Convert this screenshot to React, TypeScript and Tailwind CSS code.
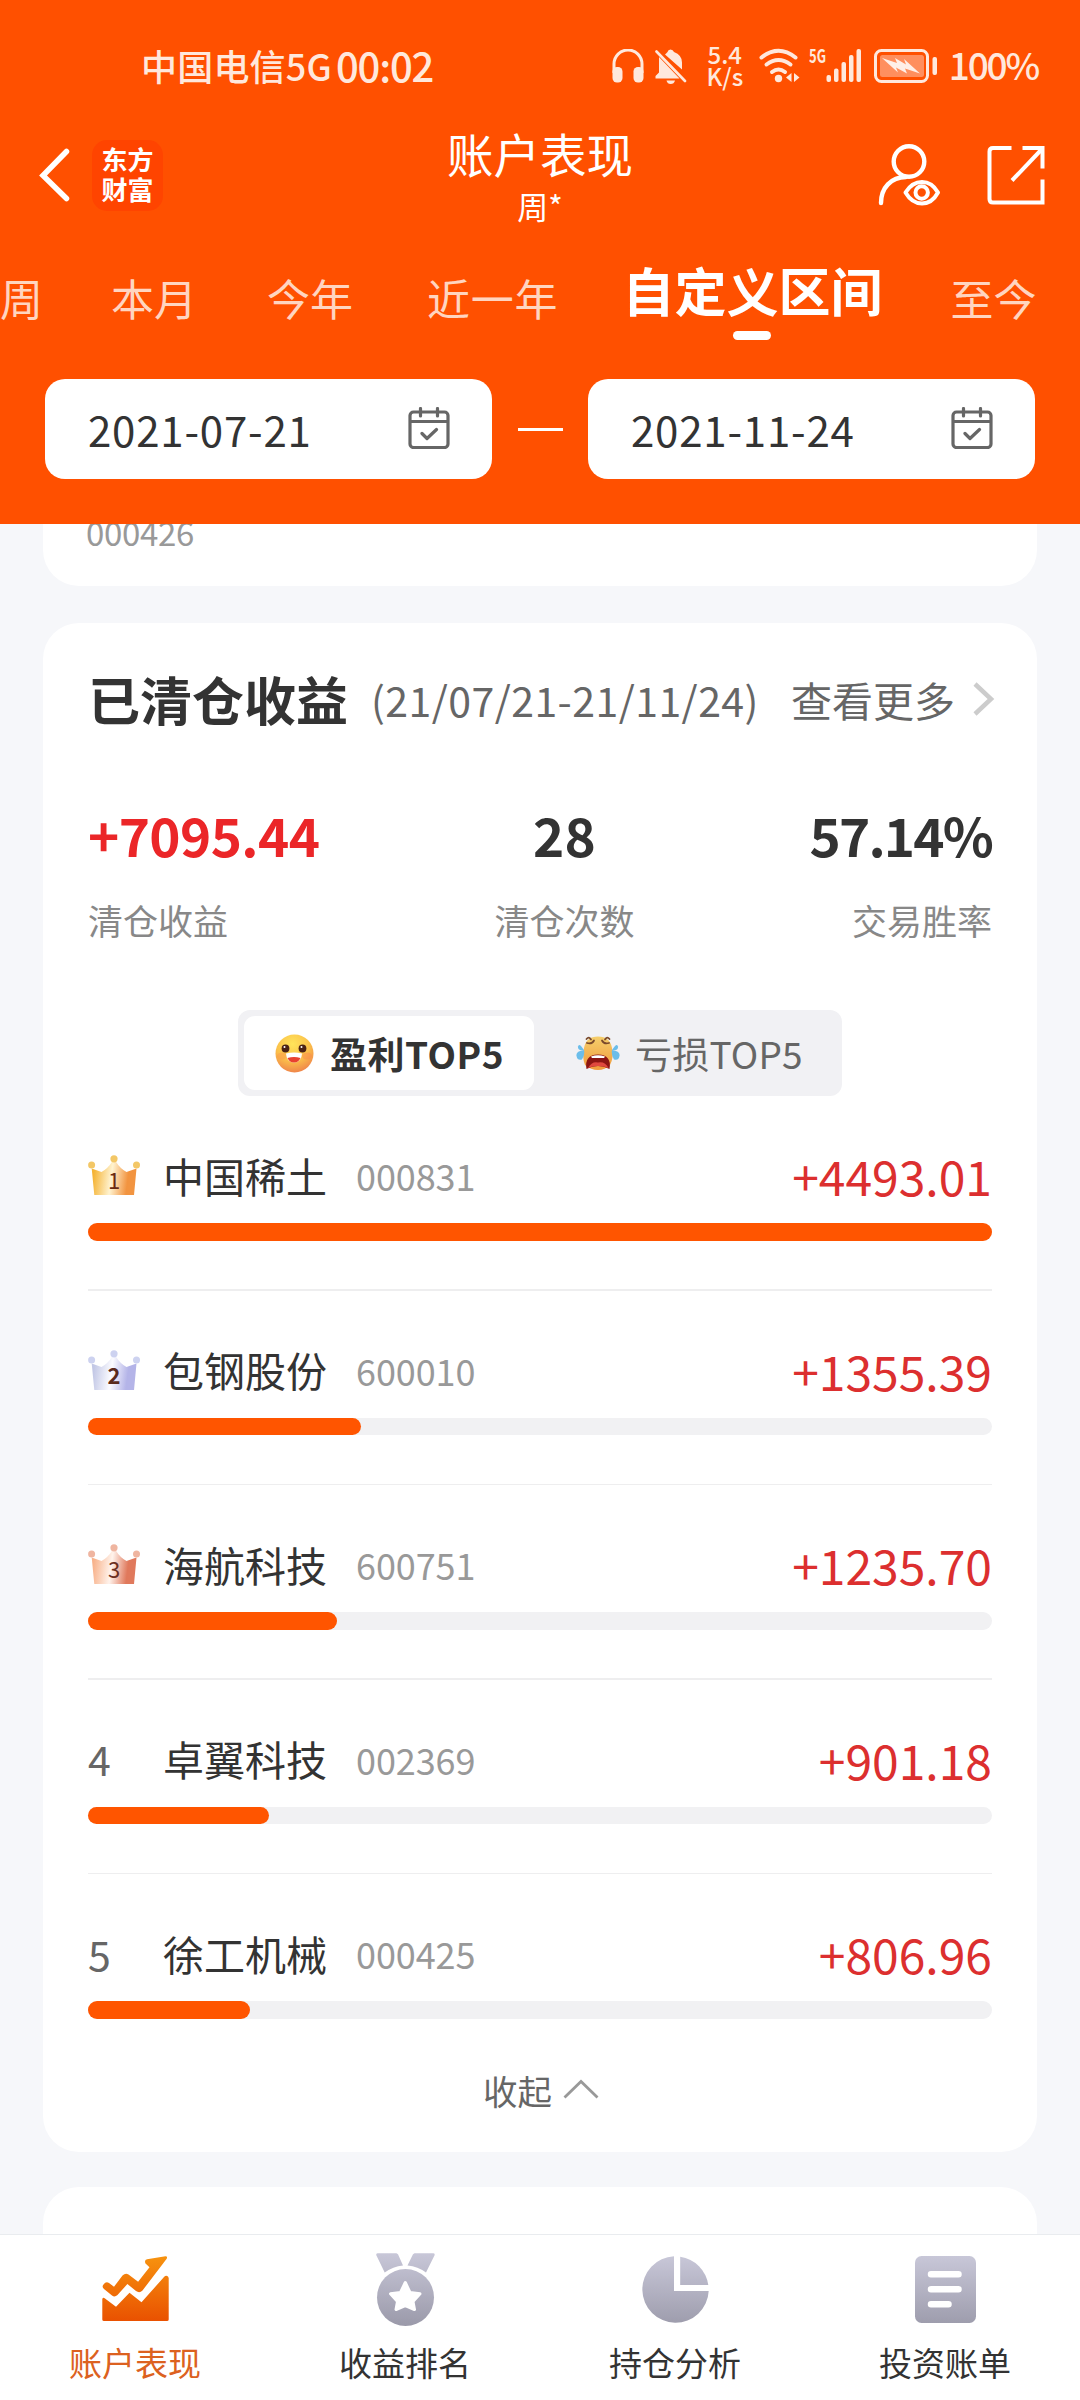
import clsx from "clsx";

const TABS = [
  { label: "周", className: "w-[41px]" },
  { label: "本月", className: "ml-[70px]" },
  { label: "今年", className: "ml-[70px]" },
  { label: "近一年", className: "ml-[74px] tracking-[0.800px]" },
  { label: "自定义区间", className: "ml-[64px]" },
  { label: "至今", className: "ml-[68px]" },
];
const ACTIVE_TAB = "自定义区间";

const STOCKS = [
  { rank: 1, name: "中国稀土", code: "000831", profit: 4493.01 },
  { rank: 2, name: "包钢股份", code: "600010", profit: 1355.39 },
  { rank: 3, name: "海航科技", code: "600751", profit: 1235.7 },
  { rank: 4, name: "卓翼科技", code: "002369", profit: 901.18 },
  { rank: 5, name: "徐工机械", code: "000425", profit: 806.96 },
];

const MAX_PROFIT = STOCKS[0].profit;

const CROWN_COLORS = [
  { left: "#f5b436", mid: "#fff3d0", right: "#f29440", ball: "#f3c766", text: "#6b2a12" },
  { left: "#c3c8e6", mid: "#fbfbff", right: "#b4b4e8", ball: "#cdd2f0", text: "#5a2a1e" },
  { left: "#f8b38c", mid: "#fff3ec", right: "#e0795c", ball: "#efb5a0", text: "#6b2f22" },
];

const StatusBar = () => (
  <div className="flex h-[129px] items-center pl-[141px] pr-[42px] leading-none text-[#ffe8dc]">
    <span className="text-[36px] font-medium tracking-[0.2px]">中国电信5G</span>
    <span className="ml-[4px] text-[40px] font-medium tracking-[-1.2px]">00:02</span>
    <div className="ml-auto flex items-center">
      <svg width="32" height="34" viewBox="0 0 32 34" className="mt-[3px]">
        <path d="M2 24V15a14 14 0 0 1 28 0v9" fill="none" stroke="currentColor" strokeWidth="3" />
        <rect x="0.5" y="18" width="10" height="15.5" rx="4.5" fill="currentColor" />
        <rect x="21.5" y="18" width="10" height="15.5" rx="4.5" fill="currentColor" />
      </svg>
      <svg width="32" height="35" viewBox="0 0 32 35" className="ml-[11px] mt-[3px]" fill="currentColor">
        <path d="M4 8 24.5 29.500H0.500V27L4 23.500Z" />
        <path d="M10 5.500Q12 3.500 12.500 3 13 0.500 15.500 0.500T19 3Q27 6 27 13.500V20.500Z" />
        <path d="M11.500 31.500H20Q19 35 15.700 35T11.500 31.500Z" />
        <path d="M1.500 2.500 30 32" stroke="currentColor" strokeWidth="2.600" strokeLinecap="round" />
      </svg>
      <div className="ml-[20px] flex w-[36px] flex-col items-center text-[24px] font-medium leading-[22px]">
        <span>5.4</span>
        <span>K/s</span>
      </div>
      <svg width="42" height="35" viewBox="0 0 42 35" className="ml-[16px] mt-[1px]">
        <g fill="none" stroke="currentColor" strokeWidth="4" strokeLinecap="round">
          <path d="M2.500 9.500Q19.500-4 36.500 9.500" />
          <path d="M7.500 16.500Q19.500 7.500 31.500 16.500" />
          <path d="M13 24Q19.500 19 26 24" />
        </g>
        <circle cx="19.500" cy="30.500" r="3.700" fill="currentColor" />
        <path d="M27 29.500 32.500 25V34ZM40.500 29.500 35 25V34Z" fill="currentColor" />
      </svg>
      <svg width="54" height="35" viewBox="0 0 54 35" className="ml-[8px] mt-[1px]" fill="currentColor">
        <text x="0" y="14.500" fontSize="19" fontWeight="700" textLength="17" lengthAdjust="spacingAndGlyphs">
          5G
        </text>
        <rect x="17.500" y="27" width="4.500" height="7" rx="2" />
        <rect x="25" y="20.500" width="4.500" height="13.500" rx="2" />
        <rect x="32.500" y="14" width="4.500" height="20" rx="2" />
        <rect x="40" y="7" width="4.500" height="27" rx="2" />
        <rect x="47.500" y="1" width="4.500" height="33" rx="2" />
      </svg>
      <svg width="64" height="34" viewBox="0 0 64 34" className="ml-[11px] mt-[3px]">
        <rect x="1.500" y="1.500" width="52" height="31" rx="6" fill="none" stroke="currentColor" strokeWidth="3" />
        <rect x="6" y="6" width="44" height="22" rx="2.500" fill="#ff8f5e" />
        <path d="M8 9 23 14 21 9 32 15.500 30 10 46 24.500 31 19.500 33 24.500 22 18.500 24 23.500Z" fill="#fff0e8" />
        <rect x="58.500" y="8" width="4.500" height="18" rx="2" fill="currentColor" />
      </svg>
      <span className="ml-[11px] text-[37px] font-medium tracking-[-2.200px]">100%</span>
    </div>
  </div>
);

const TitleBar = () => (
  <div className="grid h-[92px] grid-cols-[1fr_auto_1fr] items-center text-white">
    <div className="flex items-center pl-[38px]">
      <svg width="34" height="56" viewBox="0 0 34 56" fill="none">
        <path d="M28.500 4.500 5 28.500 28.500 51.500" stroke="currentColor" strokeWidth="5.500" strokeLinecap="round" />
      </svg>
      <div className="ml-[20px] flex h-[71px] w-[71px] flex-col items-center justify-center rounded-[15px] bg-[#ff4400] pb-[2px] text-[26px] font-bold leading-[30px]">
        <span>东方</span>
        <span>财富</span>
      </div>
    </div>
    <div className="flex flex-col items-center gap-[14px]">
      <h1 className="text-[46.500px] leading-[46px]">账户表现</h1>
      <span className="text-[31px] leading-[31px]">周*</span>
    </div>
    <div className="flex items-center justify-end gap-[45px] pr-[35px]">
      <svg width="64" height="62" viewBox="0 0 64 62" fill="none" stroke="currentColor">
        <circle cx="31" cy="17.500" r="15.300" strokeWidth="4.400" />
        <path d="M3 59C3 44 13 33 28 33" strokeWidth="4.400" strokeLinecap="round" />
        <path d="M27.500 48.500Q34 38 44 38T60 48.500Q54 59.500 44 59.500T27.500 48.500Z" strokeWidth="4" strokeLinejoin="round" />
        <circle cx="43.700" cy="48.500" r="6.200" strokeWidth="4" />
      </svg>
      <svg width="58" height="60" viewBox="0 0 58 60" fill="none" stroke="currentColor" strokeWidth="4">
        <path d="M24.500 3H6Q2.500 3 2.500 6.500V54Q2.500 57.500 6 57.500H55.500V34.500" />
        <path d="M35.500 3H55.500V23.500" />
        <path d="M55 4 25 35.500" />
      </svg>
    </div>
  </div>
);

const PeriodTabs = () => (
  <div className="flex h-[158px] items-start whitespace-nowrap">
    {TABS.map(({ label, className }) =>
      label === ACTIVE_TAB ? (
        <div key={label} className={clsx("mt-[43px] flex flex-col items-center text-white", className)}>
          <span className="text-[52px] font-bold leading-[52px]">{label}</span>
          <span className="mt-[15px] h-[9px] w-[38px] rounded-full bg-white" />
        </div>
      ) : (
        <span key={label} className={clsx("mt-[55px] text-[43px] leading-[43px] text-[#ffd5c0]", className)}>
          {label}
        </span>
      ),
    )}
  </div>
);

const DateField = ({ value }: { value: string }) => (
  <div className="flex h-[100px] w-[447px] items-center justify-between rounded-[20px] bg-white pl-[43px] pr-[42px]">
    <span className="text-[42px] leading-none tracking-[0.800px] text-[#333]">{value}</span>
    <svg width="42" height="42" viewBox="0 0 42 42" className="-mt-[2px]" fill="none" stroke="#666" strokeWidth="3.200">
      <rect x="2" y="5" width="38" height="35.500" rx="3.500" />
      <path d="M2 14.500H40" />
      <path d="M12.500 1.500V9M29.500 1.500V9M14 26.500 19 31.500 28.500 22.500" strokeLinecap="round" strokeLinejoin="round" />
    </svg>
  </div>
);

const Crown = ({ rank }: { rank: number }) => {
  const c = CROWN_COLORS[rank - 1];
  return (
    <svg width="52" height="40" viewBox="0 0 52 40">
      <defs>
        <linearGradient id={`crown-${rank}`} x1="0" y1="0" x2="1" y2="0.100">
          <stop offset="0.080" stopColor={c.left} />
          <stop offset="0.480" stopColor={c.mid} />
          <stop offset="0.850" stopColor={c.right} />
        </linearGradient>
      </defs>
      <path
        d="M3.700 13.500 13.500 17Q20 13.500 24.500 6H27.500Q32 13.500 38.500 17L48.500 13.500 46 40H6.300Z"
        fill={`url(#crown-${rank})`}
      />
      <g fill={c.ball}>
        <circle cx="3.600" cy="10" r="3.500" />
        <circle cx="26" cy="3.800" r="3.600" />
        <circle cx="48.500" cy="10" r="3.500" />
      </g>
      <text x="26" y="34" fontSize="22" fontWeight={rank === 2 ? 700 : 400} textAnchor="middle" fill={c.text}>
        {rank}
      </text>
    </svg>
  );
};

const SmileEmoji = () => (
  <svg width="39" height="39" viewBox="0 0 39 39">
    <defs>
      <radialGradient id="smile-face" cx="0.450" cy="0.250" r="0.800">
        <stop offset="0" stopColor="#ffe45a" />
        <stop offset="0.550" stopColor="#fbc04a" />
        <stop offset="1" stopColor="#ee7d4a" />
      </radialGradient>
    </defs>
    <circle cx="19.500" cy="19.500" r="19" fill="url(#smile-face)" />
    <ellipse cx="7" cy="22" rx="5" ry="3.500" fill="#fb9a4c" opacity="0.500" />
    <ellipse cx="32" cy="22" rx="5" ry="3.500" fill="#fb8a4c" opacity="0.500" />
    <circle cx="10.500" cy="14.500" r="3.900" fill="#4a2114" />
    <circle cx="27.500" cy="14.500" r="3.900" fill="#4a2114" />
    <circle cx="9.500" cy="13" r="1" fill="#fff" />
    <circle cx="26.500" cy="13" r="1" fill="#fff" />
    <path d="M11 19.500Q19 17.500 27 19.500 26.500 28.500 19 28.500T11 19.500Z" fill="#fff" />
    <path d="M12.500 24Q19 22 25.500 24 23.500 28.500 19 28.500T12.500 24Z" fill="#e8412f" />
  </svg>
);

const CryEmoji = () => (
  <svg width="44" height="35" viewBox="0 0 44 35">
    <defs>
      <linearGradient id="cry-face" x1="0" y1="0" x2="0" y2="1">
        <stop offset="0" stopColor="#f5cf6c" />
        <stop offset="1" stopColor="#f09a3c" />
      </linearGradient>
    </defs>
    <path d="M8 12Q10 0.500 22 0.500T36 12Q38 22 34 29 29 34 22 34T9 29Q6 22 8 12Z" fill="url(#cry-face)" />
    <path d="M10.500 33Q8 19 22 18.500 36 19 33.500 33 28 30 22 30T10.500 33Z" fill="#8c1512" />
    <path d="M12 32Q16 25 22 26.500 29 25 32.500 32 28 30 22 30T12 32Z" fill="#e0483e" />
    <path d="M15 20.500Q22 18 29 20.500L28 22H16Z" fill="#fff" />
    <g fill="#6bbdea">
      <path d="M8 14Q3 6 2 10.500 1.500 15 8 14Z" />
      <path d="M8 14Q-0.500 15 0.500 20T6 23.500Q9 19 8 14Z" />
      <path d="M36 14Q41 6 42 10.500 42.500 15 36 14Z" />
      <path d="M36 14Q44.500 15 43.500 20T38 23.500Q35 19 36 14Z" />
    </g>
    <path
      d="M10.500 3Q13 0 15 3.500M11 7Q16 8.500 18 4.500M33.500 3Q31 0 29 3.500M33 7Q28 8.500 26 4.500"
      fill="none"
      stroke="#7a4a2c"
      strokeWidth="1.800"
      strokeLinecap="round"
    />
  </svg>
);

const StockRow = ({ stock, last }: { stock: (typeof STOCKS)[number]; last: boolean }) => (
  <li className="flex h-[194.500px] flex-col">
    <div className="mt-[55px] flex h-[48px] items-center leading-none">
      <div className="w-[75px]">
        {stock.rank <= 3 ? <Crown rank={stock.rank} /> : <span className="text-[41px] text-[#666]">{stock.rank}</span>}
      </div>
      <span className="text-[41px] text-[#333]">{stock.name}</span>
      <span className="ml-[29px] text-[36px] tracking-[-0.100px] text-[#999]">{stock.code}</span>
      <span className="ml-auto text-[48px] text-[#dc2f2f]">+{stock.profit.toFixed(2)}</span>
    </div>
    <div className="mt-[24px] h-[17.500px] rounded-[9px] bg-[#f1f1f3]">
      <div
        className="h-full rounded-[9px] bg-[#ff5500]"
        style={{ width: `${(stock.profit / MAX_PROFIT) * 100}%` }}
      />
    </div>
    {!last && <div className="mt-auto h-[1.500px] bg-[#eeeeef]" />}
  </li>
);

const ClearedCard = () => (
  <section className="mx-[43px] mt-[37px] h-[1529px] shrink-0 rounded-[36px] bg-white px-[45px] pt-[50px]">
    <div className="flex h-[52px] items-center whitespace-nowrap leading-none">
      <h2 className="text-[52px] font-bold text-[#333]">已清仓收益</h2>
      <span className="ml-[23px] text-[41px] tracking-[0.450px] text-[#666]">(21/07/21-21/11/24)</span>
      <span className="ml-auto text-[41px] text-[#666]">查看更多</span>
      <svg width="24" height="36" viewBox="0 0 24 36" className="-mr-[4px] ml-[17px]" fill="none">
        <path d="M3 3 19 18 3 33" stroke="#ccc" strokeWidth="4.500" />
      </svg>
    </div>

    <div className="mt-[83px] flex justify-between leading-none text-[#333]">
      <div className="flex flex-col">
        <span className="text-[53px] font-bold leading-[53px] tracking-[-0.600px] text-[#eb2628]">+7095.44</span>
        <span className="mt-[41px] text-[35px] text-[#888]">清仓收益</span>
      </div>
      <div className="flex flex-col items-center">
        <span className="text-[53px] font-bold leading-[53px]">28</span>
        <span className="mt-[41px] text-[35px] text-[#888]">清仓次数</span>
      </div>
      <div className="flex flex-col items-end">
        <span className="text-[53px] font-bold leading-[53px] tracking-[-1.800px]">57.14%</span>
        <span className="mt-[41px] text-[35px] text-[#888]">交易胜率</span>
      </div>
    </div>

    <div className="mx-auto mt-[73px] flex h-[86px] w-[604px] rounded-[12px] bg-[#f1f1f4] p-[6px] text-[37px] leading-none">
      <div className="flex w-[290px] items-center rounded-[11px] bg-white pl-[31px] font-bold text-[#333]">
        <SmileEmoji />
        <span className="ml-[16px] tracking-[0.500px]">盈利TOP5</span>
      </div>
      <div className="flex flex-1 items-center pl-[42px] text-[#666]">
        <CryEmoji />
        <span className="ml-[15px] tracking-[0.200px]">亏损TOP5</span>
      </div>
    </div>

    <ul>
      {STOCKS.map((stock, i) => (
        <StockRow key={stock.code} stock={stock} last={i === STOCKS.length - 1} />
      ))}
    </ul>

    <div className="mt-[4px] flex items-center justify-center pl-[2px] text-[34.500px] leading-[35px] text-[#666]">
      收起
      <svg width="36" height="20" viewBox="0 0 36 20" className="-mt-[3px] ml-[11px]" fill="none">
        <path d="M1.500 18.500 18 2.500 34.500 18.500" stroke="#999" strokeWidth="2.800" />
      </svg>
    </div>
  </section>
);

const GradientDefs = () => (
  <svg width="0" height="0" className="absolute">
    <defs>
      <linearGradient id="nav-on" x1="0" y1="0" x2="0" y2="66" gradientUnits="userSpaceOnUse">
        <stop offset="0" stopColor="#f7930f" />
        <stop offset="1" stopColor="#e95000" />
      </linearGradient>
      <linearGradient id="nav-off" x1="0" y1="0" x2="0" y2="72" gradientUnits="userSpaceOnUse">
        <stop offset="0" stopColor="#c8c7d8" />
        <stop offset="1" stopColor="#9b9aaa" />
      </linearGradient>
    </defs>
  </svg>
);

const NAV_ITEMS = [
  {
    label: "账户表现",
    active: true,
    icon: (
      <svg width="67" height="66" viewBox="0 0 67 66" fill="url(#nav-on)">
        <path d="M1.500 28.500Q4 25 7 27L12 30.700 20.500 19.500Q23.500 16.500 26.500 18.500L36.100 25.700 47.500 11.300 43.500 7.500Q42 4 45 3.200L63.500 0.300Q66 0.500 64.500 3L40.500 34.500Q37.500 37.500 34 35L25.400 28 15.500 39Q12.700 41.500 10 39.500L2 33Q-0.500 31 1.500 28.500Z" />
        <path d="M0.300 43Q1 41 3 42.500L14 50.700 27.500 36.700 39.500 46.300 62 21Q64 19 66 20.500L66.700 22V63.500Q66.700 65 65 65H2Q0.300 65 0.300 63.500Z" />
      </svg>
    ),
  },
  {
    label: "收益排名",
    active: false,
    icon: (
      <svg width="59" height="73" viewBox="0 0 59 73" fill="url(#nav-off)">
        <path d="M1.500 0.300H20.500L22 1.300 27 12.500Q17 13.500 8.700 19.500L0.200 2Q0 0.300 1.500 0.300Z" />
        <path d="M57.500 0.300H38.500L37 1.300 31.500 12.500Q42 13.500 50 19.500L58.700 2Q59 0.300 57.500 0.300Z" />
        <circle cx="29.500" cy="44.500" r="28.500" />
        <path
          d="M29.300 29.500 34 39.500 44 40.800 37 48.500 38.500 56.500 29.300 52.500 20 56.500 21.500 48.500 14.500 40.800 24.500 39.500Z"
          fill="#fff"
          stroke="#fff"
          strokeWidth="3"
          strokeLinejoin="round"
        />
      </svg>
    ),
  },
  {
    label: "持仓分析",
    active: false,
    icon: (
      <svg width="67" height="67" viewBox="0 0 67 67" fill="url(#nav-off)">
        <path d="M32 0.300V35H66.700A33.200 33.200 0 1 1 32 0.300Z" />
        <path d="M38.200 0.700A33.200 33.200 0 0 1 66.300 29H38.200Z" />
      </svg>
    ),
  },
  {
    label: "投资账单",
    active: false,
    icon: (
      <svg width="61" height="67" viewBox="0 0 61 67" fill="url(#nav-off)">
        <rect width="61" height="67" rx="6.500" />
        <path d="M16 18.300H43.500M16 33.300H43.500M16 48.300H33.500" stroke="#fff" strokeWidth="6.500" strokeLinecap="round" />
      </svg>
    ),
  },
];

const BottomNav = () => (
  <nav className="grid h-[166px] shrink-0 grid-cols-4 border-t border-[#e9ecef] bg-white">
    {NAV_ITEMS.map((item) => (
      <div key={item.label} className="flex flex-col items-center">
        <div className="mt-[16px] flex h-[76px] items-center">{item.icon}</div>
        <span className={clsx("mt-[19px] text-[33px] leading-[33px]", item.active ? "text-[#dc6120]" : "text-[#333]")}>
          {item.label}
        </span>
      </div>
    ))}
  </nav>
);

const App = () => {
  return (
    <div className="flex h-[2400px] w-[1080px] flex-col overflow-hidden bg-[#f6f7fa] font-['Noto_Sans_CJK_SC',sans-serif]">
      <GradientDefs />
      <header className="h-[524px] shrink-0 overflow-hidden bg-[#ff5000]">
        <StatusBar />
        <TitleBar />
        <PeriodTabs />
        <div className="flex items-center justify-between px-[45px]">
          <DateField value="2021-07-21" />
          <div className="h-[3px] w-[45px] bg-white" />
          <DateField value="2021-11-24" />
        </div>
      </header>

      <main className="flex min-h-0 flex-1 flex-col overflow-hidden">
        <section className="mx-[43px] h-[62px] shrink-0 rounded-b-[36px] bg-white px-[43px]">
          <div className="-mt-[8px] text-[33px] leading-[33px] tracking-[-0.300px] text-[#999]">000426</div>
        </section>
        <ClearedCard />
        <section className="mx-[43px] mt-[35px] h-[200px] shrink-0 rounded-t-[36px] bg-white" />
      </main>

      <BottomNav />
    </div>
  );
};

export default App;
